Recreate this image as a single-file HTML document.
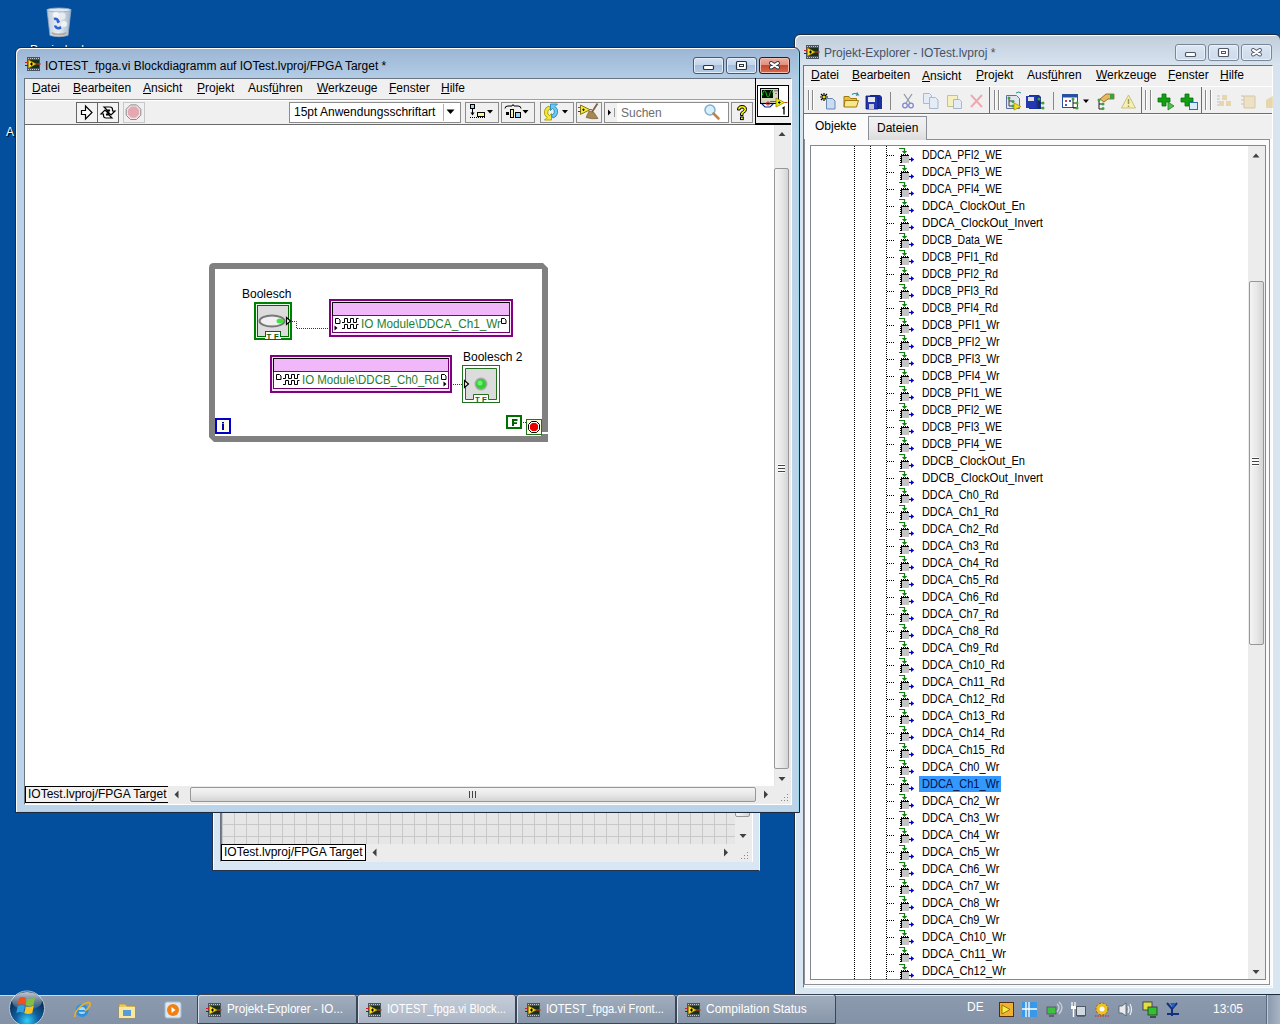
<!DOCTYPE html>
<html><head><meta charset="utf-8">
<style>
*{margin:0;padding:0;box-sizing:border-box}
html,body{width:1280px;height:1024px;overflow:hidden}
body{background:#034f9d;font-family:"Liberation Sans",sans-serif;font-size:12px;position:relative;color:#000}
.a{position:absolute}
.t{position:absolute;white-space:nowrap;line-height:14px}
u{text-decoration:underline;text-decoration-thickness:1px;text-underline-offset:1px}
.frm{position:absolute;border:1px solid #1b2a3c;border-radius:6px 6px 0 0}
.act{background:linear-gradient(#9ab4d4 0,#a6c0dc 14px,#b2cce6 29px,#bcd2e8 80px,#bcd4ea)}
.ina{background:linear-gradient(#c2cdda 0,#ccd8e5 15px,#d6e2ee 29px,#d8e4f0 80px,#d8e6f2)}
.cl{position:absolute;background:#f0f0f0;border:1px solid #6b7585}
.menu .t{top:4px}
.tb{position:absolute;border:1px solid #8a8a8a;background:#f0f0f0}
</style></head><body>

<!-- DESKTOP -->

<svg class="a" style="left:44px;top:6px" width="30" height="34" viewBox="0 0 30 34">
<defs><linearGradient id="rb" x1="0" x2="1"><stop offset="0" stop-color="#b8c8d8"/><stop offset=".45" stop-color="#eef2f6"/><stop offset="1" stop-color="#a0b4c8"/></linearGradient></defs>
<path d="M3 3.5 L27 3.5 L24 29.5 Q15 32 6 29.5 Z" fill="url(#rb)" stroke="#90a8c0" stroke-width=".8"/>
<ellipse cx="15" cy="4" rx="12" ry="2" fill="#dde6ee" stroke="#8ca4bc" stroke-width=".8"/>
<circle cx="12" cy="9" r="3" fill="#f4f6f8"/><circle cx="18" cy="10" r="3.5" fill="#e8ecf0"/><circle cx="14" cy="22" r="4" fill="#e4e8ec"/><circle cx="20" cy="18" r="3" fill="#f0f2f4"/>
<path d="M10 13 q3 -1 4.5 2.5 l-1.5 1" stroke="#3060d0" stroke-width="2.4" fill="none"/>
<path d="M11 19.5 q1 3.5 5 2.5 l-0.5 -1.5" stroke="#3060d0" stroke-width="2.4" fill="none"/>
<path d="M8 28 Q15 31 22 28 L22.5 26 Q15 29 7.5 26Z" fill="#a89888" opacity=".8"/>
</svg>
<div class="t" style="left:30px;top:43px;color:#fff;text-shadow:0 1px 2px #000;font-size:12px">Papierkorb</div>
<div class="t" style="left:6px;top:125px;color:#fff;text-shadow:1px 1px 1px #000;font-size:12px">A</div>


<!-- BACKGROUND WINDOW -->

<div class="a" style="left:212px;top:700px;width:548px;height:171px;background:linear-gradient(#d6e3f2,#d9e6f4);border:1px solid #24344c;border-right-color:#f4f8fc;border-top:none;box-shadow:inset 1px 0 0 #fff"></div>
<div class="a" style="left:220px;top:700px;width:533px;height:162px;background:#f0f0f0;border-left:1px solid #6a7480;border-right:1px solid #fff;border-bottom:1px solid #fff"></div>
<div class="a" style="left:221px;top:700px;width:514px;height:144px;background-color:#e6e6e6;background-image:linear-gradient(90deg,#c8c8c8 1px,transparent 1px),linear-gradient(#c8c8c8 1px,transparent 1px);background-size:12px 12px;background-position:0px 4px;border-left:1px solid #808080"></div>
<div class="a" style="left:735px;top:700px;width:17px;height:144px;background:#ececec"></div>
<div class="a" style="left:735px;top:700px;width:15px;height:117px;border:1px solid #979797;border-radius:2px;background:linear-gradient(90deg,#f4f4f4,#e8e8e8 50%,#d4d4d4)"></div>
<svg class="a" style="left:735px;top:700px" width="17" height="144"><path d="M4.5 134h7l-3.5 4z" fill="#404040"/></svg>
<div class="a" style="left:221px;top:844px;width:531px;height:18px;background:#ececec"></div>
<div class="a" style="left:221px;top:844px;width:145px;height:17px;background:#fff;border:1px solid #000"></div>
<div class="t" style="left:224px;top:845px">IOTest.lvproj/FPGA Target</div>
<svg class="a" style="left:366px;top:844px" width="386" height="18">
<path d="M10.5 4.5v8l-4-4z" fill="#404040"/>
<path d="M358 4.5v8l4-4z" fill="#404040"/>
<g fill="#888"><rect x="381" y="8" width="1" height="1"/><rect x="381" y="11" width="1" height="1"/><rect x="381" y="14" width="1" height="1"/><rect x="378" y="11" width="1" height="1"/><rect x="378" y="14" width="1" height="1"/><rect x="375" y="14" width="1" height="1"/></g>
</svg>


<!-- PROJECT EXPLORER -->
<div id="pewin">
<div class="frm ina" style="left:794px;top:34px;width:487px;height:961px;box-shadow:inset 1px 1px 0 #fff"></div>
<svg class="a" style="left:804px;top:44px" width="16" height="16" viewBox="0 0 16 16">
<rect x="2" y="1" width="13" height="14" fill="#4a5560"/>
<rect x="3" y="4" width="11" height="8" fill="#183018"/>
<path d="M3.5 4 L11 8 L3.5 12 Z" fill="#f8e020" stroke="#c89000" stroke-width=".6"/>
<path d="M5 8h3M6.5 6.5v3" stroke="#000" stroke-width="1"/>
<path d="M0 6.5h3" stroke="#d02020" stroke-width="1"/>
<path d="M0 9.5h3" stroke="#2020c0" stroke-width="1"/>
<path d="M11 8h5" stroke="#d04020" stroke-width="1"/>
<path d="M3 2.5h11M3 13.5h11" stroke="#c8c8c8" stroke-width="1" stroke-dasharray="1 1"/>
</svg>
<div class="t" style="left:824px;top:46px;color:#465266">Projekt-Explorer - IOTest.lvproj *</div>
<!-- client -->
<div class="a" style="left:803px;top:65px;width:470px;height:923px;background:#f0f0f0;border-left:1px solid #6a7480;border-top:1px solid #6a7480;border-right:1px solid #fff;border-bottom:1px solid #fff"></div>
<div class="t" style="left:811px;top:68px"><u>D</u>atei</div>
<div class="t" style="left:852px;top:68px"><u>B</u>earbeiten</div>
<div class="t" style="left:922px;top:69px"><u>A</u>nsicht</div>
<div class="t" style="left:976px;top:68px"><u>P</u>rojekt</div>
<div class="t" style="left:1027px;top:68px">Ausf<u>ü</u>hren</div>
<div class="t" style="left:1096px;top:68px"><u>W</u>erkzeuge</div>
<div class="t" style="left:1168px;top:68px"><u>F</u>enster</div>
<div class="t" style="left:1220px;top:68px"><u>H</u>ilfe</div>
<div class="a" style="left:804px;top:86px;width:468px;height:1px;background:#fff"></div>
<div class="a" style="left:804px;top:113px;width:468px;height:1px;background:#6e6e6e"></div>
<div class="a" style="left:989px;top:87px;width:1px;height:26px;background:#6e6e6e"></div>
<div class="a" style="left:1141px;top:87px;width:1px;height:26px;background:#6e6e6e"></div>
<div class="a" style="left:1201px;top:87px;width:1px;height:26px;background:#6e6e6e"></div>
<svg class="a" style="left:803px;top:87px" width="470" height="26" viewBox="803 87 470 26">
<g stroke="#888" stroke-width="1"><path d="M808.5 90v20M812.5 90v20M994.5 90v20M998.5 90v20M1145.5 90v20M1150.5 90v20M1205.5 90v20M1210.5 90v20"/></g>
<g stroke="#fff"><path d="M809.5 90v20M813.5 90v20M995.5 90v20M999.5 90v20M1146.5 90v20M1151.5 90v20M1206.5 90v20M1211.5 90v20"/></g>
<path d="M890.5 92v18M1053.5 92v18" stroke="#888"/>
<!-- new -->
<path d="M824 93v8M820 97h8M821 94l6 6M827 94l-6 6" stroke="#000" stroke-width="1.2"/>
<circle cx="824" cy="97" r="1.5" fill="#f0e000"/>
<path d="M826.5 98.5h6l2.5 2.5v8h-8.5z" fill="#c8dcf4" stroke="#6a88b0"/>
<!-- open -->
<path d="M844 96.5h5l1.5 2h6v8h-12.5z" fill="#e8c040" stroke="#a07810"/>
<path d="M845 100.5h13.5l-2 6.5h-12.5z" fill="#f8e88c" stroke="#a07810"/>
<path d="M852 94.5q3-2 6 0l-1 -2M858 94.5l-2 1" stroke="#2090a0" fill="none" stroke-width="1.2"/>
<!-- save -->
<path d="M870 95h10l2 2v12h-12z" fill="#1830a0"/>
<path d="M866 96h11l1 1v12h-12z" fill="#2438b0" stroke="#101870" stroke-width=".8"/>
<rect x="868" y="97" width="7" height="5" fill="#e8e8e8"/>
<rect x="869" y="104" width="5" height="5" fill="#c8c8d8"/>
<!-- cut -->
<path d="M904 94l6 9M912 94l-6 9" stroke="#9098a8" stroke-width="1.3"/>
<circle cx="905" cy="105.5" r="2.3" fill="none" stroke="#8088d0" stroke-width="1.3"/>
<circle cx="911" cy="105.5" r="2.3" fill="none" stroke="#8088d0" stroke-width="1.3"/>
<!-- copy -->
<path d="M923.5 93.5h6l2 2v8h-8z" fill="#e4ecf8" stroke="#a8b8d0"/>
<path d="M929.5 97.5h6l2.5 2.5v8.5h-8.5z" fill="#e4ecf8" stroke="#a8b8d0"/>
<!-- paste -->
<path d="M947.5 95.5h10v11h-10z" fill="#f4f0c0" stroke="#c8c090"/>
<path d="M953.5 99.5h6l2 2v7h-8z" fill="#e4ecf8" stroke="#a8b8d0"/>
<!-- delete -->
<path d="M971 95l11 12M982 95l-11 12" stroke="#f0a8b0" stroke-width="2"/>
<!-- build spec -->
<path d="M1006.5 95.5h10l3 3v10h-13z" fill="#e0e4f0" stroke="#6070a0"/>
<path d="M1009 98v8h4M1009 101h3" stroke="#404040" fill="none"/>
<circle cx="1009" cy="98" r="1.5" fill="#40a040"/><circle cx="1013" cy="101.5" r="1.5" fill="#40a040"/><circle cx="1013" cy="106" r="1.5" fill="#40a040"/>
<path d="M1014 103l7 3.5-7 3.5z" fill="#f0e020" stroke="#a09000" stroke-width=".7"/>
<path d="M1016 93q3-2 5 0" stroke="#2090a0" fill="none"/>
<!-- save all -->
<path d="M1029 95h10l2 2v12h-12z" fill="#1830a0"/>
<path d="M1026 96h10v12h-10z" fill="#2438b0"/>
<rect x="1028" y="97" width="6" height="4" fill="#e0e0e0"/>
<path d="M1039 99v9h4M1039 103h3" stroke="#202020" fill="none"/>
<circle cx="1039" cy="99" r="1.5" fill="#40a040"/><circle cx="1043" cy="103" r="1.5" fill="#40a040"/><circle cx="1043" cy="108" r="1.5" fill="#40a040"/>
<!-- grid tree -->
<rect x="1062.5" y="94.5" width="15" height="13" fill="#fff" stroke="#2850a0"/>
<rect x="1063" y="95" width="14" height="2.5" fill="#2850a0"/>
<rect x="1065" y="100" width="2" height="2" fill="#d04040"/><rect x="1065" y="104" width="2" height="2" fill="#4060c0"/><rect x="1069" y="100" width="2" height="2" fill="#4060c0"/>
<path d="M1073 99v9h4M1073 103h3" stroke="#202020" fill="none"/>
<circle cx="1073" cy="99" r="1.5" fill="#40a040"/><circle cx="1077" cy="103" r="1.5" fill="#40a040"/><circle cx="1077" cy="108" r="1.5" fill="#40a040"/>
<path d="M1083 99.5h6l-3 3.5z" fill="#000"/>
<!-- tree hand -->
<path d="M1099 100v9h4M1099 104h3" stroke="#202020" fill="none"/>
<circle cx="1099" cy="100" r="1.5" fill="#40a040"/><circle cx="1103" cy="104" r="1.5" fill="#40a040"/><circle cx="1103" cy="108.5" r="1.5" fill="#40a040"/>
<path d="M1100 99l6-5h8v5h-6l-4 3z" fill="#e8b860" stroke="#806020" stroke-width=".8"/>
<rect x="1110" y="94" width="4" height="5" fill="#40a040"/>
<!-- warning -->
<path d="M1128.5 95l7 13h-14z" fill="#f4f0b0" stroke="#c8c080"/>
<path d="M1128.5 99v5M1128.5 105.5v1.5" stroke="#a09860" stroke-width="1.5"/>
<!-- green plus arrow -->
<path d="M1162 94h4v4h4v4h-4v4h-4v-4h-4v-4h4z" fill="#10a010" stroke="#087008" stroke-width=".8"/>
<path d="M1168 102l6 4-6 4z" fill="#50c050" stroke="#208020" stroke-width=".8"/>
<!-- green plus window -->
<path d="M1185 94h4v4h4v4h-4v4h-4v-4h-4v-4h4z" fill="#10a010" stroke="#087008" stroke-width=".8"/>
<rect x="1189.5" y="102.5" width="8" height="7" fill="#d8ecfc" stroke="#3070b0"/>
<!-- faded icons -->
<g opacity=".45">
<rect x="1222" y="95" width="5" height="5" fill="#d8b860"/><rect x="1219" y="101" width="5" height="5" fill="#d8b860"/><rect x="1226" y="101" width="5" height="5" fill="#d8b860"/>
<path d="M1217 96h3M1217 99h3M1217 102h2M1217 105h2" stroke="#888"/>
<path d="M1244 96h11v12h-11z" fill="#e8d090" stroke="#b89850"/>
<path d="M1241 96h3M1241 100h3M1241 104h3" stroke="#888"/>
<path d="M1266 100l7-4v12h-7z" fill="#d8b860"/>
</g>
</svg>
<!-- tabs -->
<div class="a" style="left:804px;top:114px;width:468px;height:872px;background:#fbfbfb"></div>
<div class="a" style="left:868px;top:115px;width:404px;height:24px;background:#f0f0f0"></div>
<div class="a" style="left:868px;top:116px;width:59px;height:24px;border:1px solid #8c8f98;border-bottom:none;background:linear-gradient(#f2f2f2,#ebebeb 50%,#dcdcdc)"></div>
<div class="a" style="left:927px;top:139px;width:343px;height:1px;background:#8c8f98"></div>
<div class="a" style="left:804px;top:139px;width:1px;height:846px;background:#8c8f98"></div>
<div class="a" style="left:1269px;top:139px;width:1px;height:846px;background:#8c8f98"></div>
<div class="a" style="left:803px;top:984px;width:467px;height:1px;background:#8c8f98"></div>
<div class="t" style="left:815px;top:119px">Objekte</div>
<div class="t" style="left:877px;top:121px">Dateien</div>
<!-- tree -->
<div class="a" style="left:810px;top:145px;width:456px;height:835px;background:#fff;border:1px solid #828790"></div>
<svg class="a" style="left:811px;top:146px" width="437" height="833" viewBox="811 146 437 833">
<defs>
<g id="chip">
<path d="M887 155h1v1h-1zM889 155h1v1h-1zM891 155h1v1h-1zM893 155h1v1h-1z" fill="#000"/>
<path d="M899 148.5h5.5v3" stroke="#108010" fill="none" stroke-width="1.2"/>
<path d="M901.8 151h5.4l-2.7 3z" fill="#108010"/>
<rect x="902" y="156" width="7" height="7" fill="#c4c4c4"/>
<path d="M901 155h8v1h-7v7h-1z" fill="#000"/>
<path d="M901 154h1v1h-1zM903 154h1v1h-1zM905 154h1v1h-1zM907 154h1v1h-1zM900 156h1v1h-1zM900 158h1v1h-1zM900 160h1v1h-1zM900 162h1v1h-1z" fill="#000"/>
<path d="M909 159.5h3" stroke="#0000d0" stroke-width="1.2"/>
<path d="M911 157l3.2 2.5-3.2 2.5z" fill="#0000d0"/>
</g>
</defs>
<path d="M854.5 146v833M870.5 146v833M886.5 146v833" stroke="#000" stroke-dasharray="1 1"/>
<use href="#chip" x="0" y="0"/>
<use href="#chip" x="0" y="17"/>
<use href="#chip" x="0" y="34"/>
<use href="#chip" x="0" y="51"/>
<use href="#chip" x="0" y="68"/>
<use href="#chip" x="0" y="85"/>
<use href="#chip" x="0" y="102"/>
<use href="#chip" x="0" y="119"/>
<use href="#chip" x="0" y="136"/>
<use href="#chip" x="0" y="153"/>
<use href="#chip" x="0" y="170"/>
<use href="#chip" x="0" y="187"/>
<use href="#chip" x="0" y="204"/>
<use href="#chip" x="0" y="221"/>
<use href="#chip" x="0" y="238"/>
<use href="#chip" x="0" y="255"/>
<use href="#chip" x="0" y="272"/>
<use href="#chip" x="0" y="289"/>
<use href="#chip" x="0" y="306"/>
<use href="#chip" x="0" y="323"/>
<use href="#chip" x="0" y="340"/>
<use href="#chip" x="0" y="357"/>
<use href="#chip" x="0" y="374"/>
<use href="#chip" x="0" y="391"/>
<use href="#chip" x="0" y="408"/>
<use href="#chip" x="0" y="425"/>
<use href="#chip" x="0" y="442"/>
<use href="#chip" x="0" y="459"/>
<use href="#chip" x="0" y="476"/>
<use href="#chip" x="0" y="493"/>
<use href="#chip" x="0" y="510"/>
<use href="#chip" x="0" y="527"/>
<use href="#chip" x="0" y="544"/>
<use href="#chip" x="0" y="561"/>
<use href="#chip" x="0" y="578"/>
<use href="#chip" x="0" y="595"/>
<use href="#chip" x="0" y="612"/>
<use href="#chip" x="0" y="629"/>
<use href="#chip" x="0" y="646"/>
<use href="#chip" x="0" y="663"/>
<use href="#chip" x="0" y="680"/>
<use href="#chip" x="0" y="697"/>
<use href="#chip" x="0" y="714"/>
<use href="#chip" x="0" y="731"/>
<use href="#chip" x="0" y="748"/>
<use href="#chip" x="0" y="765"/>
<use href="#chip" x="0" y="782"/>
<use href="#chip" x="0" y="799"/>
<use href="#chip" x="0" y="816"/>
</svg>
<div class="t" style="left:922px;top:148px;transform:scaleX(0.869);transform-origin:0 0">DDCA_PFI2_WE</div>
<div class="t" style="left:922px;top:165px;transform:scaleX(0.869);transform-origin:0 0">DDCA_PFI3_WE</div>
<div class="t" style="left:922px;top:182px;transform:scaleX(0.869);transform-origin:0 0">DDCA_PFI4_WE</div>
<div class="t" style="left:922px;top:199px;transform:scaleX(0.925);transform-origin:0 0">DDCA_ClockOut_En</div>
<div class="t" style="left:922px;top:216px;transform:scaleX(0.955);transform-origin:0 0">DDCA_ClockOut_Invert</div>
<div class="t" style="left:922px;top:233px;transform:scaleX(0.875);transform-origin:0 0">DDCB_Data_WE</div>
<div class="t" style="left:922px;top:250px;transform:scaleX(0.863);transform-origin:0 0">DDCB_PFI1_Rd</div>
<div class="t" style="left:922px;top:267px;transform:scaleX(0.863);transform-origin:0 0">DDCB_PFI2_Rd</div>
<div class="t" style="left:922px;top:284px;transform:scaleX(0.863);transform-origin:0 0">DDCB_PFI3_Rd</div>
<div class="t" style="left:922px;top:301px;transform:scaleX(0.863);transform-origin:0 0">DDCB_PFI4_Rd</div>
<div class="t" style="left:922px;top:318px;transform:scaleX(0.883);transform-origin:0 0">DDCB_PFI1_Wr</div>
<div class="t" style="left:922px;top:335px;transform:scaleX(0.883);transform-origin:0 0">DDCB_PFI2_Wr</div>
<div class="t" style="left:922px;top:352px;transform:scaleX(0.883);transform-origin:0 0">DDCB_PFI3_Wr</div>
<div class="t" style="left:922px;top:369px;transform:scaleX(0.883);transform-origin:0 0">DDCB_PFI4_Wr</div>
<div class="t" style="left:922px;top:386px;transform:scaleX(0.869);transform-origin:0 0">DDCB_PFI1_WE</div>
<div class="t" style="left:922px;top:403px;transform:scaleX(0.869);transform-origin:0 0">DDCB_PFI2_WE</div>
<div class="t" style="left:922px;top:420px;transform:scaleX(0.869);transform-origin:0 0">DDCB_PFI3_WE</div>
<div class="t" style="left:922px;top:437px;transform:scaleX(0.869);transform-origin:0 0">DDCB_PFI4_WE</div>
<div class="t" style="left:922px;top:454px;transform:scaleX(0.925);transform-origin:0 0">DDCB_ClockOut_En</div>
<div class="t" style="left:922px;top:471px;transform:scaleX(0.955);transform-origin:0 0">DDCB_ClockOut_Invert</div>
<div class="t" style="left:922px;top:488px;transform:scaleX(0.904);transform-origin:0 0">DDCA_Ch0_Rd</div>
<div class="t" style="left:922px;top:505px;transform:scaleX(0.904);transform-origin:0 0">DDCA_Ch1_Rd</div>
<div class="t" style="left:922px;top:522px;transform:scaleX(0.904);transform-origin:0 0">DDCA_Ch2_Rd</div>
<div class="t" style="left:922px;top:539px;transform:scaleX(0.904);transform-origin:0 0">DDCA_Ch3_Rd</div>
<div class="t" style="left:922px;top:556px;transform:scaleX(0.904);transform-origin:0 0">DDCA_Ch4_Rd</div>
<div class="t" style="left:922px;top:573px;transform:scaleX(0.904);transform-origin:0 0">DDCA_Ch5_Rd</div>
<div class="t" style="left:922px;top:590px;transform:scaleX(0.904);transform-origin:0 0">DDCA_Ch6_Rd</div>
<div class="t" style="left:922px;top:607px;transform:scaleX(0.904);transform-origin:0 0">DDCA_Ch7_Rd</div>
<div class="t" style="left:922px;top:624px;transform:scaleX(0.904);transform-origin:0 0">DDCA_Ch8_Rd</div>
<div class="t" style="left:922px;top:641px;transform:scaleX(0.904);transform-origin:0 0">DDCA_Ch9_Rd</div>
<div class="t" style="left:922px;top:658px;transform:scaleX(0.903);transform-origin:0 0">DDCA_Ch10_Rd</div>
<div class="t" style="left:922px;top:675px;transform:scaleX(0.912);transform-origin:0 0">DDCA_Ch11_Rd</div>
<div class="t" style="left:922px;top:692px;transform:scaleX(0.903);transform-origin:0 0">DDCA_Ch12_Rd</div>
<div class="t" style="left:922px;top:709px;transform:scaleX(0.903);transform-origin:0 0">DDCA_Ch13_Rd</div>
<div class="t" style="left:922px;top:726px;transform:scaleX(0.903);transform-origin:0 0">DDCA_Ch14_Rd</div>
<div class="t" style="left:922px;top:743px;transform:scaleX(0.903);transform-origin:0 0">DDCA_Ch15_Rd</div>
<div class="t" style="left:922px;top:760px;transform:scaleX(0.917);transform-origin:0 0">DDCA_Ch0_Wr</div>
<div class="a" style="left:919px;top:776px;width:82px;height:16px;background:#3399ff"></div>
<div class="t" style="left:922px;top:777px;color:#001048;transform:scaleX(0.917);transform-origin:0 0">DDCA_Ch1_Wr</div>
<div class="t" style="left:922px;top:794px;transform:scaleX(0.917);transform-origin:0 0">DDCA_Ch2_Wr</div>
<div class="t" style="left:922px;top:811px;transform:scaleX(0.917);transform-origin:0 0">DDCA_Ch3_Wr</div>
<div class="t" style="left:922px;top:828px;transform:scaleX(0.917);transform-origin:0 0">DDCA_Ch4_Wr</div>
<div class="t" style="left:922px;top:845px;transform:scaleX(0.917);transform-origin:0 0">DDCA_Ch5_Wr</div>
<div class="t" style="left:922px;top:862px;transform:scaleX(0.917);transform-origin:0 0">DDCA_Ch6_Wr</div>
<div class="t" style="left:922px;top:879px;transform:scaleX(0.917);transform-origin:0 0">DDCA_Ch7_Wr</div>
<div class="t" style="left:922px;top:896px;transform:scaleX(0.917);transform-origin:0 0">DDCA_Ch8_Wr</div>
<div class="t" style="left:922px;top:913px;transform:scaleX(0.917);transform-origin:0 0">DDCA_Ch9_Wr</div>
<div class="t" style="left:922px;top:930px;transform:scaleX(0.921);transform-origin:0 0">DDCA_Ch10_Wr</div>
<div class="t" style="left:922px;top:947px;transform:scaleX(0.931);transform-origin:0 0">DDCA_Ch11_Wr</div>
<div class="t" style="left:922px;top:964px;transform:scaleX(0.921);transform-origin:0 0">DDCA_Ch12_Wr</div>
<!-- tree vscroll -->
<div class="a" style="left:1248px;top:146px;width:17px;height:833px;background:#ececec"></div>
<div class="a" style="left:1249px;top:281px;width:15px;height:364px;border:1px solid #979797;border-radius:2px;background:linear-gradient(90deg,#f4f4f4,#e8e8e8 50%,#d4d4d4)"></div>
<svg class="a" style="left:1248px;top:146px" width="17" height="833">
<path d="M4.5 11.5h7l-3.5-4z" fill="#404040"/>
<path d="M4.5 824h7l-3.5 4z" fill="#404040"/>
<path d="M4 312.5h7M4 315.5h7M4 318.5h7" stroke="#fff" stroke-width="2.5"/><path d="M4 312.5h7M4 315.5h7M4 318.5h7" stroke="#444" stroke-width="1.2"/>
</svg>
<!-- title buttons inactive -->
<div class="a" style="left:1175px;top:44px;width:31px;height:17px;border-radius:3px;background:linear-gradient(#dfe8f3,#d3dfee 50%,#cfdcec);border:1px solid #7a8698;box-shadow:inset 0 0 0 1px #e8f0f8"></div>
<div class="a" style="left:1208px;top:44px;width:31px;height:17px;border-radius:3px;background:linear-gradient(#dfe8f3,#d3dfee 50%,#cfdcec);border:1px solid #7a8698;box-shadow:inset 0 0 0 1px #e8f0f8"></div>
<div class="a" style="left:1241px;top:44px;width:31px;height:17px;border-radius:3px;background:linear-gradient(#dfe8f3,#d3dfee 50%,#cfdcec);border:1px solid #7a8698;box-shadow:inset 0 0 0 1px #e8f0f8"></div>
<svg class="a" style="left:1175px;top:44px" width="97" height="17" viewBox="0 0 97 17">
<rect x="10.5" y="8.5" width="10" height="4" rx="1" fill="#fff" stroke="#505868" stroke-width="1.2"/>
<rect x="43.5" y="4.5" width="10" height="8" rx="1" fill="#fff" stroke="#505868" stroke-width="1.2"/>
<rect x="46.5" y="7.5" width="4" height="2" fill="#fff" stroke="#505868" stroke-width="1"/>
<path d="M78 6L85 10.5M85 6L78 10.5" stroke="#505868" stroke-width="3.9" stroke-linecap="round"/>
<path d="M78 6L85 10.5M85 6L78 10.5" stroke="#fff" stroke-width="2.1" stroke-linecap="round"/>
</svg>
</div>

<!-- MAIN WINDOW -->
<div id="mainwin">
<div class="frm act" style="left:15px;top:47px;width:785px;height:766px;border-radius:6px 6px 0 0;box-shadow:inset 1px 1px 0 #fff, inset -1px -1px 0 #9cd6ea"></div>
<div class="a" style="left:693px;top:57px;width:31px;height:17px;border-radius:3px;background:linear-gradient(#d4e2f2 0%,#c4d6ec 45%,#a6bfdc 50%,#b4cce6 100%);border:1px solid #4a5870;box-shadow:inset 0 0 0 1px #e4eef8"></div>
<div class="a" style="left:726px;top:57px;width:31px;height:17px;border-radius:3px;background:linear-gradient(#d4e2f2 0%,#c4d6ec 45%,#a6bfdc 50%,#b4cce6 100%);border:1px solid #4a5870;box-shadow:inset 0 0 0 1px #e4eef8"></div>
<div class="a" style="left:759px;top:57px;width:31px;height:17px;border-radius:3px;background:linear-gradient(#eab0a0 0%,#e09080 45%,#c84a30 50%,#d86850 100%);border:1px solid #3c1410;box-shadow:inset 0 0 0 1px #f0c0b0"></div>
<svg class="a" style="left:693px;top:57px" width="97" height="17" viewBox="0 0 97 17">
<rect x="10.5" y="8.5" width="10" height="4" rx="1" fill="#fff" stroke="#2c3440" stroke-width="1.2"/>
<rect x="43.5" y="4.5" width="10" height="8" rx="1" fill="#fff" stroke="#2c3440" stroke-width="1.2"/>
<rect x="46.5" y="7.5" width="4" height="2" fill="#fff" stroke="#2c3440" stroke-width="1"/>
<path d="M78 6L85 10.5M85 6L78 10.5" stroke="#2c3440" stroke-width="3.9" stroke-linecap="round"/>
<path d="M78 6L85 10.5M85 6L78 10.5" stroke="#fff" stroke-width="2.1" stroke-linecap="round"/>
</svg>
<!-- title icon -->
<svg class="a" style="left:25px;top:56px" width="16" height="16" viewBox="0 0 16 16">
<rect x="2" y="1" width="13" height="14" fill="#4a5560"/>
<rect x="3" y="4" width="11" height="8" fill="#183018"/>
<path d="M3.5 4 L11 8 L3.5 12 Z" fill="#f8e020" stroke="#c89000" stroke-width=".6"/>
<path d="M5 8h3M6.5 6.5v3" stroke="#000" stroke-width="1"/>
<path d="M0 6.5h3M0 9.5h3" stroke="#d02020" stroke-width="1"/>
<path d="M0 9.5h3" stroke="#2020c0" stroke-width="1"/>
<path d="M11 8h5" stroke="#d04020" stroke-width="1"/>
<path d="M3 2.5h11M3 13.5h11" stroke="#c8c8c8" stroke-width="1" stroke-dasharray="1 1"/>
</svg>
<div class="t" style="left:45px;top:59px;color:#000">IOTEST_fpga.vi Blockdiagramm auf IOTest.lvproj/FPGA Target *</div>

<!-- client -->
<div class="a" style="left:24px;top:78px;width:768px;height:727px;background:#f0f0f0;border-left:1px solid #6a7480;border-top:1px solid #6a7480;border-right:1px solid #fff;border-bottom:1px solid #fff"></div>
<!-- menubar -->
<div class="t" style="left:32px;top:81px"><u>D</u>atei</div>
<div class="t" style="left:73px;top:81px"><u>B</u>earbeiten</div>
<div class="t" style="left:143px;top:81px"><u>A</u>nsicht</div>
<div class="t" style="left:197px;top:81px"><u>P</u>rojekt</div>
<div class="t" style="left:248px;top:81px">Ausf<u>ü</u>hren</div>
<div class="t" style="left:317px;top:81px"><u>W</u>erkzeuge</div>
<div class="t" style="left:389px;top:81px"><u>F</u>enster</div>
<div class="t" style="left:441px;top:81px"><u>H</u>ilfe</div>
<!-- toolbar lines -->
<div class="a" style="left:25px;top:99px;width:730px;height:1px;background:#a0a0a0"></div>
<div class="a" style="left:25px;top:100px;width:730px;height:1px;background:#fff"></div>
<div class="a" style="left:25px;top:124px;width:766px;height:1px;background:#6a6a6a"></div>
<div class="a" style="left:755px;top:78px;width:1px;height:47px;background:#000"></div>
<div class="a" style="left:755px;top:123px;width:36px;height:2px;background:#000"></div>
<!-- run buttons -->
<div class="a" style="left:76px;top:102px;width:22px;height:21px;border:1px solid #666;background:#f4f4f4"></div>
<div class="a" style="left:97px;top:102px;width:22px;height:21px;border:1px solid #666;background:#f4f4f4"></div>
<div class="a" style="left:123px;top:102px;width:22px;height:21px;border:1px solid #c8c8c8;background:#f0f0f0"></div>
<svg class="a" style="left:76px;top:102px" width="70" height="21" viewBox="0 0 70 21">
<path d="M5.5 8.5h4v-4.5l6.5 6.5-6.5 6.5v-4.5h-4z" fill="#fff" stroke="#000" stroke-width="1.2" stroke-linejoin="miter"/>
<g transform="translate(24,4)" fill="#fff" stroke="#000" stroke-width="1.2" stroke-linejoin="miter">
<path d="M4 1 H10 Q12.5 1 12.5 3.5 V5 H15 L11 9 L7 5 H9.5 V4 H7 Z"/>
<path d="M12 12 H6 Q3.5 12 3.5 9.5 V8 H1 L5 4 L9 8 H6.5 V9 H9 Z"/>
</g>
<path d="M54.48 2.90 L60.52 2.90 L64.80 7.18 L64.80 13.22 L60.52 17.50 L54.48 17.50 L50.20 13.22 L50.20 7.18Z" fill="#f4e4e6" stroke="#8a8a8a" stroke-width="1"/>
<path d="M55.18 4.60 L59.82 4.60 L63.10 7.88 L63.10 12.52 L59.82 15.80 L55.18 15.80 L51.90 12.52 L51.90 7.88Z" fill="#e4a8b0"/>
</svg>
<!-- font dropdown -->
<div class="a" style="left:289px;top:102px;width:172px;height:21px;border:1px solid #8c8c8c;background:#fff"></div>
<div class="a" style="left:443px;top:104px;width:1px;height:17px;background:#b0b0b0"></div>
<div class="t" style="left:294px;top:105px">15pt Anwendungsschriftart</div>
<svg class="a" style="left:446px;top:109px" width="9" height="6"><path d="M0.5 0.5h8l-4 4.5z" fill="#000"/></svg>
<!-- align etc -->
<div class="a" style="left:465px;top:102px;width:34px;height:21px;border:1px solid #8c8c8c;background:#f0f0f0"></div>
<div class="a" style="left:501px;top:102px;width:34px;height:21px;border:1px solid #8c8c8c;background:#f0f0f0"></div>
<div class="a" style="left:540px;top:102px;width:34px;height:21px;border:1px solid #8c8c8c;background:#f0f0f0"></div>
<div class="a" style="left:576px;top:102px;width:26px;height:21px;border:1px solid #8c8c8c;background:#f0f0f0"></div>
<svg class="a" style="left:465px;top:102px" width="140" height="21" viewBox="465 102 140 21">
<!-- align -->
<rect x="470.5" y="104.5" width="4" height="4" fill="#90d8f8" stroke="#000" stroke-width="1"/>
<path d="M472.5 109v6" stroke="#000"/>
<path d="M470.5 112.5h4l-2 3z" fill="#000"/>
<path d="M470 117.5h1M472 117.5h1M474 117.5h1M476 117.5h1M478 117.5h1M480 117.5h1M482 117.5h1M484 117.5h1" stroke="#000"/>
<rect x="477.5" y="112.5" width="7" height="4" fill="#fcf4a0" stroke="#000"/>
<path d="M487 110h6l-3 3.5z" fill="#000"/>
<!-- distribute -->
<path d="M505 108.5 q0-2.5 3-2.5 h4 l1-1.5 1 1.5 h4 q3 0 3 2.5" stroke="#000" fill="none"/>
<rect x="506" y="112" width="3" height="3" fill="#000"/>
<rect x="510.5" y="109.5" width="3" height="8" fill="#fcf4a0" stroke="#000"/>
<rect x="515.5" y="112.5" width="5" height="5" fill="#90d8f8" stroke="#000"/>
<path d="M522.5 110h6l-3 3.5z" fill="#000"/>
<!-- reorder -->
<path d="M549 106 a6.5 6.5 0 0 0 -2 11.5 l-2.5 2.5 h7 v-6.5 l-2 2.2 a3.8 3.8 0 0 1 1.3 -7z" fill="#f0e840" stroke="#a89800" stroke-width=".9"/>
<path d="M553 118 a6.5 6.5 0 0 0 2 -11.5 l2.5 -2.5 h-7 v6.5 l2 -2.2 a3.8 3.8 0 0 1 -1.3 7z" fill="#70c8f0" stroke="#2088c0" stroke-width=".9"/>
<path d="M562 110h6l-3 3.5z" fill="#000"/>
<!-- cleanup -->
<path d="M580.5 105 l9.5 4.7 -9.5 4.7z" fill="#f0e840" stroke="#806800" stroke-width=".9"/>
<path d="M578 107.5h2.5" stroke="#d03020"/><path d="M578 111.5h2.5" stroke="#2030c0"/>
<path d="M583.5 108.5v2.5M582.2 109.7h2.6" stroke="#000" stroke-width=".8"/>
<path d="M590 109.7h2" stroke="#d03020"/>
<path d="M597.5 103.5 L592 112" stroke="#806040" stroke-width="1.8"/>
<path d="M589 111 l5 1.5 l4 6 q-6 1 -12 -1z" fill="#a88850" stroke="#6a5030" stroke-width=".6"/>
</svg>
<!-- search -->
<div class="a" style="left:604px;top:102px;width:125px;height:21px;border:1px solid #8c8c8c;background:#fff"></div>
<div class="a" style="left:605px;top:103px;width:12px;height:19px;background:#f0f0f0"></div>
<svg class="a" style="left:606px;top:108px" width="10" height="9"><path d="M2 1.5l3 3-3 3z" fill="#000"/><path d="M8.5 0v9" stroke="#999"/></svg>
<div class="t" style="left:621px;top:106px;color:#6d6d6d">Suchen</div>
<svg class="a" style="left:703px;top:103px" width="18" height="18" viewBox="0 0 18 18">
<circle cx="7" cy="7" r="5" fill="#d8f0fc" stroke="#80b0d0" stroke-width="1.5"/>
<path d="M10.5 10.5 l5 5" stroke="#c88040" stroke-width="2.5" stroke-linecap="round"/>
</svg>
<div class="a" style="left:731px;top:102px;width:22px;height:21px;border:1px solid #8c8c8c;background:#f0f0f0"></div>
<svg class="a" style="left:731px;top:102px" width="22" height="21" viewBox="0 0 22 21">
<path d="M6.5 8 Q6.5 3.5 11 3.5 Q15.5 3.5 15.5 7.5 Q15.5 10 12.5 11.3 Q12 11.6 12 12.5 V13.5 H9.5 V12 Q9.5 10.2 11.3 9.4 Q13 8.6 13 7.5 Q13 6 11 6 Q9 6 9 8 Z" fill="#f8f400" stroke="#000" stroke-width="1"/>
<rect x="9.5" y="15" width="2.8" height="2.6" fill="#f8f400" stroke="#000" stroke-width="1"/>
</svg>
<!-- VI icon -->
<div class="a" style="left:757px;top:85px;width:32px;height:32px;border:1px solid #000;background:#fff"></div>
<svg class="a" style="left:758px;top:86px" width="30" height="30" viewBox="758 86 30 30">
<rect x="760.5" y="88.5" width="18" height="15" fill="#d8d8c0" stroke="#000"/>
<rect x="762" y="90" width="11" height="8" fill="#001000"/>
<path d="M762.3 95.5 C763.3 89.5 765.3 89.5 766.3 94 C767.3 98 768.8 98 769.8 94 C770.8 89.5 772.3 89.5 773 93" stroke="#20c020" fill="none"/>
<path d="M775 90v1.5M777 90v1.5M775.5 93.5h1" stroke="#404040"/>
<path d="M761 103.5h13" stroke="#000" stroke-width="1.2"/>
<path d="M762 104 l3 3 h5 l3 -3" stroke="#102080" fill="none" stroke-width="1.1"/>
<circle cx="768" cy="103.5" r="1.6" fill="none" stroke="#c02020" stroke-width="1"/>
<path d="M770 101.5h6" stroke="#d04020"/>
<path d="M776 98l8.5 4.5 -8.5 4.5z" fill="#f0f000" stroke="#808000" stroke-width=".7"/>
<path d="M778 102.5h2.5M779.25 101.25v2.5" stroke="#000" stroke-width="1"/>
<path d="M784.5 102.5h3" stroke="#c04020"/>
<path d="M782.5 108.5l1.5-1.2V114.5" stroke="#000" stroke-width="1.3" fill="none"/>
</svg>
<!-- canvas -->
<div class="a" style="left:25px;top:125px;width:749px;height:661px;background:#fff"></div>

<svg class="a" style="left:200px;top:250px" width="360" height="200" viewBox="200 250 360 200" font-family="Liberation Sans">
<!-- while loop -->
<path d="M214 263 H543 L548 268 V432 H542 V269 H215 V436 H541 V434 H548 V442 H214 L209 437 V268 Q209 263 214 263 Z" fill="#808080"/>
<!-- iteration terminal -->
<rect x="216" y="419" width="14" height="14" fill="#fff" stroke="#0000c8" stroke-width="2"/>
<rect x="219" y="421" width="9" height="10" fill="#fcfce0"/>
<rect x="222" y="422" width="2" height="1.5" fill="#000080"/>
<rect x="222" y="424" width="2" height="6" fill="#0000b0"/>
<!-- F constant -->
<rect x="507" y="416" width="14" height="12" fill="#fff" stroke="#007000" stroke-width="2"/>
<path d="M512 419h5.5v2h-3.5v1.2h3v1.8h-3v2h-2z" fill="#006000"/>
<path d="M523 422.5h3" stroke="#006000" stroke-dasharray="1 1"/>
<!-- stop -->
<rect x="526.5" y="419.5" width="15" height="15" fill="#f8fcd8" stroke="#207020"/>
<path d="M531.5 421.5h5l3 3v5l-3 3h-5l-3-3v-5z" fill="#fff" stroke="#000" stroke-width="1"/>
<path d="M532 423h4l2 2v4l-2 2h-4l-2-2v-4z" fill="#f00000"/>
<!-- Boolesch control -->
<text x="242" y="298" font-size="12" fill="#000">Boolesch</text>
<rect x="255" y="303" width="36" height="36" fill="#e8fce8" stroke="#008000" stroke-width="2"/>
<rect x="257.5" y="305.5" width="31" height="31" fill="#dcdcdc" stroke="#006a00" stroke-width="1"/>
<rect x="265.5" y="331.5" width="15" height="8" fill="#fff" stroke="#006a00" stroke-width="1"/>
<rect x="265" y="337" width="16" height="2" fill="#fff"/>
<text x="266.5" y="338.5" font-size="7.8" font-weight="bold" fill="#006000">T</text><text x="274" y="338.5" font-size="7.8" font-weight="bold" fill="#006000">F</text>
<ellipse cx="272" cy="321" rx="12.5" ry="5.5" fill="#f0f0f0" stroke="#787878" stroke-width="2"/>
<ellipse cx="280" cy="321" rx="3.5" ry="2.5" fill="#40e040"/>
<path d="M286.5 317.5 l4 3.5 -4 3.5z" fill="#fff" stroke="#000" stroke-width="1.2"/>
<!-- wire 1 -->
<path d="M292 321.5h4.5v7h33" stroke="#006000" stroke-dasharray="1 1" fill="none"/>
<!-- node 1 -->
<rect x="330" y="300" width="182" height="36" fill="#ffe8ff" stroke="#800080" stroke-width="2"/>
<rect x="332.5" y="302.5" width="177" height="30" fill="#fff" stroke="#700070" stroke-width="1"/>
<path d="M332.5 316V302.5H509.5" stroke="#000" fill="none"/>
<rect x="333" y="303" width="176" height="12" fill="#f0b8f8"/>
<path d="M333 315.5h176" stroke="#800080"/>
<text x="361" y="328" font-size="12" fill="#1e7e30" textLength="140" lengthAdjust="spacingAndGlyphs">IO Module\DDCA_Ch1_Wr</text>
<g fill="none" stroke="#000" stroke-width="1">
<path d="M335.5 318.5h3l1.5 1.5v3.5h-4.5z"/>
<path d="M501.5 318.5h3l1.5 1.5v3.5h-4.5z"/>
<path d="M342 322.5h2.5v-4h3v4h3v-4h3v4h3v-4h2"/>
<path d="M342 328.5h2.5v-4h3v4h3v-4h3v4h3v-4h2"/>
</g>
<path d="M334.5 325.5l3 2.5-3 2.5z" fill="#000"/>
<!-- node 2 -->
<rect x="271" y="356" width="180" height="36" fill="#ffe8ff" stroke="#800080" stroke-width="2"/>
<rect x="273.5" y="358.5" width="175" height="30" fill="#fff" stroke="#700070" stroke-width="1"/>
<path d="M273.5 372V358.5H448.5" stroke="#000" fill="none"/>
<rect x="274" y="359" width="174" height="12" fill="#f0b8f8"/>
<path d="M274 371.5h174" stroke="#800080"/>
<text x="302" y="384" font-size="12" fill="#1e7e30" textLength="137" lengthAdjust="spacingAndGlyphs">IO Module\DDCB_Ch0_Rd</text>
<g fill="none" stroke="#000" stroke-width="1">
<path d="M276.5 374.5h3l1.5 1.5v3.5h-4.5z"/>
<path d="M441.5 374.5h3l1.5 1.5v3.5h-4.5z"/>
<path d="M283 378.5h2.5v-4h3v4h3v-4h3v4h3v-4h2"/>
<path d="M283 384.5h2.5v-4h3v4h3v-4h3v4h3v-4h2"/>
</g>
<path d="M443.5 381.5l3 2.5-3 2.5z" fill="#000"/>
<!-- wire 2 -->
<path d="M453 384.5h10" stroke="#006000" stroke-dasharray="1 1" fill="none"/>
<!-- Boolesch 2 indicator -->
<text x="463" y="361" font-size="12" fill="#000">Boolesch 2</text>
<rect x="462.5" y="365.5" width="37" height="37" fill="#fff" stroke="#207020" stroke-width="1"/>
<path d="M465.5 399.5V368.5H496.5V399.5H488.5V394.5H473.5V399.5Z" fill="#dcdcdc" stroke="#207020" stroke-width="1"/>
<text x="475" y="401.5" font-size="7.8" font-weight="bold" fill="#206020">T</text><text x="482" y="401.5" font-size="7.8" font-weight="bold" fill="#206020">F</text>
<circle cx="481" cy="384" r="6.5" fill="#a8a8a8"/>
<circle cx="481" cy="384" r="5" fill="#30d030"/>
<circle cx="480" cy="383" r="2.5" fill="#70f070"/>
<path d="M464.5 380.5 l4 3.5 -4 3.5z" fill="#fff" stroke="#000" stroke-width="1.2"/>
</svg>
<!-- vscroll -->
<div class="a" style="left:774px;top:125px;width:17px;height:661px;background:#ececec;border-left:1px solid #e4e4e4"></div>
<div class="a" style="left:774px;top:168px;width:15px;height:601px;border:1px solid #979797;border-radius:2px;background:linear-gradient(90deg,#f4f4f4,#e8e8e8 50%,#d4d4d4)"></div>
<svg class="a" style="left:774px;top:125px" width="17" height="661">
<path d="M4.5 11h7l-3.5-4z" fill="#404040"/>
<path d="M4.5 652h7l-3.5 4z" fill="#404040"/>
<path d="M4 340.5h7M4 343.5h7M4 346.5h7" stroke="#fff" stroke-width="2.5"/><path d="M4 340.5h7M4 343.5h7M4 346.5h7" stroke="#444" stroke-width="1.2"/>
</svg>
<!-- hscroll row -->
<div class="a" style="left:25px;top:786px;width:766px;height:18px;background:#ececec"></div>
<div class="a" style="left:25px;top:786px;width:143px;height:17px;background:#f4f2f0;border:1px solid #000;border-right:none"></div>
<div class="t" style="left:28px;top:787px">IOTest.lvproj/FPGA Target</div>
<div class="a" style="left:190px;top:787px;width:566px;height:15px;border:1px solid #979797;border-radius:2px;background:linear-gradient(#f4f4f4,#e8e8e8 50%,#d4d4d4)"></div>
<svg class="a" style="left:168px;top:786px" width="623" height="18">
<path d="M10.5 4.5v8l-4-4z" fill="#404040"/>
<path d="M596 4.5v8l4-4z" fill="#404040"/>
<path d="M301.5 5v7M304.5 5v7M307.5 5v7" stroke="#fff" stroke-width="2.5"/><path d="M301.5 5v7M304.5 5v7M307.5 5v7" stroke="#444" stroke-width="1.2"/>
<g fill="#888"><rect x="619" y="8" width="1" height="1"/><rect x="619" y="11" width="1" height="1"/><rect x="619" y="14" width="1" height="1"/><rect x="616" y="11" width="1" height="1"/><rect x="616" y="14" width="1" height="1"/><rect x="613" y="14" width="1" height="1"/></g>
</svg>
</div>

<!-- PROJECT EXPLORER -->
<!-- TASKBAR -->

<div class="a" style="left:0;top:995px;width:1280px;height:29px;background:linear-gradient(#8c9aae,#8492a8);border-top:1px solid #d4dae2"></div>
<!-- start orb -->
<svg class="a" style="left:8px;top:989px" width="38" height="35" viewBox="0 0 38 35">
<defs>
<radialGradient id="orb" cx=".5" cy=".85" r=".7"><stop offset="0" stop-color="#30d0f8"/><stop offset=".45" stop-color="#1060a0"/><stop offset="1" stop-color="#08284a"/></radialGradient>
<linearGradient id="orbh" x1="0" y1="0" x2="0" y2="1"><stop offset="0" stop-color="#fff" stop-opacity=".75"/><stop offset="1" stop-color="#fff" stop-opacity=".05"/></linearGradient>
</defs>
<circle cx="19" cy="19.5" r="17.5" fill="url(#orb)" stroke="#b8c8d8" stroke-width="1"/>
<ellipse cx="19" cy="12" rx="15" ry="9" fill="url(#orbh)"/>
<path d="M11 9 q4-2 7 0 l-1.5 7 q-3-2-7 0z" fill="#f05020"/>
<path d="M19 9.5 q4 1 8-1 l-1.5 7.5 q-4 2-8 0z" fill="#80c040"/>
<path d="M9.8 17 q4-2 7 0 l-1.5 7 q-3-2-7 0z" fill="#30a0e0"/>
<path d="M17.8 17.5 q4 1 8-1 l-1.5 7.5 q-4 2-8 0z" fill="#f8c020"/>
</svg>
<!-- IE -->
<svg class="a" style="left:72px;top:1000px" width="20" height="20" viewBox="0 0 20 20">
<circle cx="10" cy="10.5" r="6.5" fill="#2a90e0"/>
<circle cx="10" cy="10.5" r="3.5" fill="#a8dcf8"/>
<rect x="5" y="10" width="11" height="1.8" fill="#2a90e0"/>
<path d="M3 17 Q2 12 9 6 Q16 1 18 3 Q19 6 13 11" stroke="#f0b020" stroke-width="1.6" fill="none"/>
</svg>
<!-- explorer -->
<svg class="a" style="left:117px;top:1001px" width="20" height="18" viewBox="0 0 20 18">
<path d="M2 3h6l2 2h8v12h-16z" fill="#e8c860" stroke="#b09040" stroke-width=".8"/>
<rect x="2" y="6" width="16" height="11" fill="#f8e8a0"/>
<rect x="6" y="9" width="8" height="6" fill="#5a9ad8"/>
</svg>
<!-- media -->
<svg class="a" style="left:164px;top:1001px" width="18" height="18" viewBox="0 0 18 18">
<rect x="1" y="1" width="16" height="16" rx="2" fill="#dce8f4" stroke="#a8bcd0"/>
<circle cx="9" cy="9" r="6" fill="#f08010"/>
<path d="M7.5 6l4 3-4 3z" fill="#fff"/>
</svg>
<div class="a" style="left:197px;top:994px;width:160px;height:30px;border:1px solid #3a4658;border-radius:3px 3px 0 0;background:linear-gradient(#a2aebe,#94a2b4 50%,#8896aa);box-shadow:inset 1px 1px 0 #d8dee8"></div>
<svg class="a" style="left:206px;top:1002px" width="16" height="16" viewBox="0 0 16 16">
<rect x="2" y="1" width="13" height="14" fill="#4a5560"/>
<rect x="3" y="4" width="11" height="8" fill="#183018"/>
<path d="M3.5 4 L11 8 L3.5 12 Z" fill="#f8e020" stroke="#c89000" stroke-width=".6"/>
<path d="M5 8h3M6.5 6.5v3" stroke="#000" stroke-width="1"/>
<path d="M0 6.5h3" stroke="#d02020" stroke-width="1"/>
<path d="M0 9.5h3" stroke="#2020c0" stroke-width="1"/>
<path d="M11 8h5" stroke="#d04020" stroke-width="1"/>
<path d="M3 2.5h11M3 13.5h11" stroke="#c8c8c8" stroke-width="1" stroke-dasharray="1 1"/>
</svg>
<div class="t" style="left:227px;top:1002px;color:#fff;font-size:12px;transform:scaleX(0.972);transform-origin:0 0">Projekt-Explorer - IO...</div><div class="a" style="left:357px;top:994px;width:159px;height:30px;border:1px solid #3a4658;border-radius:3px 3px 0 0;background:linear-gradient(#c4ccd8,#b8c2d0 50%,#aab4c4);box-shadow:inset 1px 1px 0 #d8dee8"></div>
<svg class="a" style="left:366px;top:1002px" width="16" height="16" viewBox="0 0 16 16">
<rect x="2" y="1" width="13" height="14" fill="#4a5560"/>
<rect x="3" y="4" width="11" height="8" fill="#183018"/>
<path d="M3.5 4 L11 8 L3.5 12 Z" fill="#f8e020" stroke="#c89000" stroke-width=".6"/>
<path d="M5 8h3M6.5 6.5v3" stroke="#000" stroke-width="1"/>
<path d="M0 6.5h3" stroke="#d02020" stroke-width="1"/>
<path d="M0 9.5h3" stroke="#2020c0" stroke-width="1"/>
<path d="M11 8h5" stroke="#d04020" stroke-width="1"/>
<path d="M3 2.5h11M3 13.5h11" stroke="#c8c8c8" stroke-width="1" stroke-dasharray="1 1"/>
</svg>
<div class="t" style="left:387px;top:1002px;color:#fff;font-size:12px;transform:scaleX(0.929);transform-origin:0 0">IOTEST_fpga.vi Block...</div><div class="a" style="left:516px;top:994px;width:160px;height:30px;border:1px solid #3a4658;border-radius:3px 3px 0 0;background:linear-gradient(#a2aebe,#94a2b4 50%,#8896aa);box-shadow:inset 1px 1px 0 #d8dee8"></div>
<svg class="a" style="left:525px;top:1002px" width="16" height="16" viewBox="0 0 16 16">
<rect x="2" y="1" width="13" height="14" fill="#4a5560"/>
<rect x="3" y="4" width="11" height="8" fill="#183018"/>
<path d="M3.5 4 L11 8 L3.5 12 Z" fill="#f8e020" stroke="#c89000" stroke-width=".6"/>
<path d="M5 8h3M6.5 6.5v3" stroke="#000" stroke-width="1"/>
<path d="M0 6.5h3" stroke="#d02020" stroke-width="1"/>
<path d="M0 9.5h3" stroke="#2020c0" stroke-width="1"/>
<path d="M11 8h5" stroke="#d04020" stroke-width="1"/>
<path d="M3 2.5h11M3 13.5h11" stroke="#c8c8c8" stroke-width="1" stroke-dasharray="1 1"/>
</svg>
<div class="t" style="left:546px;top:1002px;color:#fff;font-size:12px;transform:scaleX(0.931);transform-origin:0 0">IOTEST_fpga.vi Front...</div><div class="a" style="left:676px;top:994px;width:160px;height:30px;border:1px solid #3a4658;border-radius:3px 3px 0 0;background:linear-gradient(#a2aebe,#94a2b4 50%,#8896aa);box-shadow:inset 1px 1px 0 #d8dee8"></div>
<svg class="a" style="left:685px;top:1002px" width="16" height="16" viewBox="0 0 16 16">
<rect x="2" y="1" width="13" height="14" fill="#4a5560"/>
<rect x="3" y="4" width="11" height="8" fill="#183018"/>
<path d="M3.5 4 L11 8 L3.5 12 Z" fill="#f8e020" stroke="#c89000" stroke-width=".6"/>
<path d="M5 8h3M6.5 6.5v3" stroke="#000" stroke-width="1"/>
<path d="M0 6.5h3" stroke="#d02020" stroke-width="1"/>
<path d="M0 9.5h3" stroke="#2020c0" stroke-width="1"/>
<path d="M11 8h5" stroke="#d04020" stroke-width="1"/>
<path d="M3 2.5h11M3 13.5h11" stroke="#c8c8c8" stroke-width="1" stroke-dasharray="1 1"/>
</svg>
<div class="t" style="left:706px;top:1002px;color:#fff;font-size:12px">Compilation Status</div>
<div class="t" style="left:967px;top:1000px;color:#fff;font-size:12px">DE</div>
<!-- tray -->
<svg class="a" style="left:995px;top:998px" width="195" height="22" viewBox="995 998 195 22">
<!-- lv -->
<rect x="999.5" y="1002.5" width="14" height="14" fill="#f0b030" stroke="#503010"/>
<path d="M1002 1005l8 4.5-8 4.5z" fill="#f8f040" stroke="#806000" stroke-width=".8"/>
<!-- windows -->
<rect x="1022" y="1002" width="15" height="15" fill="#3a98e8"/>
<path d="M1022 1009h15M1029 1002v15M1026 1002v15" stroke="#fff" stroke-width="1.3"/>
<!-- network -->
<rect x="1047" y="1007" width="9" height="7" fill="#40c040" stroke="#505050" stroke-width=".8"/>
<path d="M1049 1016h5" stroke="#505050" stroke-width="1.5"/>
<path d="M1057 1004 q4 3 0 8M1059 1002q6 5 0 12" stroke="#c8d0d8" fill="none" stroke-width="1.4"/>
<!-- power -->
<path d="M1072 1002v5M1075 1002v5" stroke="#fff" stroke-width="1.2"/>
<rect x="1071" y="1006" width="5" height="3" fill="#fff"/>
<path d="M1073.5 1009v8" stroke="#fff" stroke-width="1.5"/>
<rect x="1076.5" y="1006.5" width="9" height="9" fill="#d0d8e0" stroke="#505860"/>
<path d="M1077 1016h8" stroke="#505860" stroke-width="1.5"/>
<!-- gear -->
<circle cx="1102" cy="1009" r="6" fill="#f0c020" stroke="#906010" stroke-width="1" stroke-dasharray="2 1.5"/>
<circle cx="1102" cy="1009" r="2.5" fill="#fff"/>
<path d="M1095 1016h14" stroke="#d02020" stroke-dasharray="1.5 1"/>
<!-- speaker -->
<path d="M1119 1006h3l4-3v13l-4-3h-3z" fill="#e8ecf0" stroke="#505860" stroke-width=".8"/>
<path d="M1128 1006q2 3.5 0 7M1130 1004q3 5.5 0 11" stroke="#e8ecf0" fill="none" stroke-width="1.2"/>
<!-- monitors -->
<rect x="1143" y="1002" width="9" height="8" fill="#e0e040" stroke="#303030" stroke-width=".8"/>
<rect x="1148" y="1007" width="9" height="8" fill="#30c030" stroke="#303030" stroke-width=".8"/>
<path d="M1150 1017h6" stroke="#303030" stroke-width="1.5"/>
<!-- NI usb -->
<path d="M1167 1003l5 6 5-6M1172 1009v7M1167 1014h12" stroke="#103080" stroke-width="2" fill="none"/>
<path d="M1170 1003h6l-3 5z" fill="#2060c0"/>
</svg>
<div class="t" style="left:1213px;top:1002px;color:#fff;font-size:12px">13:05</div>
<div class="a" style="left:1266px;top:995px;width:14px;height:29px;background:linear-gradient(90deg,#8a98ac,#a8b4c4);border-left:1px solid #5a6a80;box-shadow:inset 1px 0 0 #c0c8d4"></div>


</body></html>
